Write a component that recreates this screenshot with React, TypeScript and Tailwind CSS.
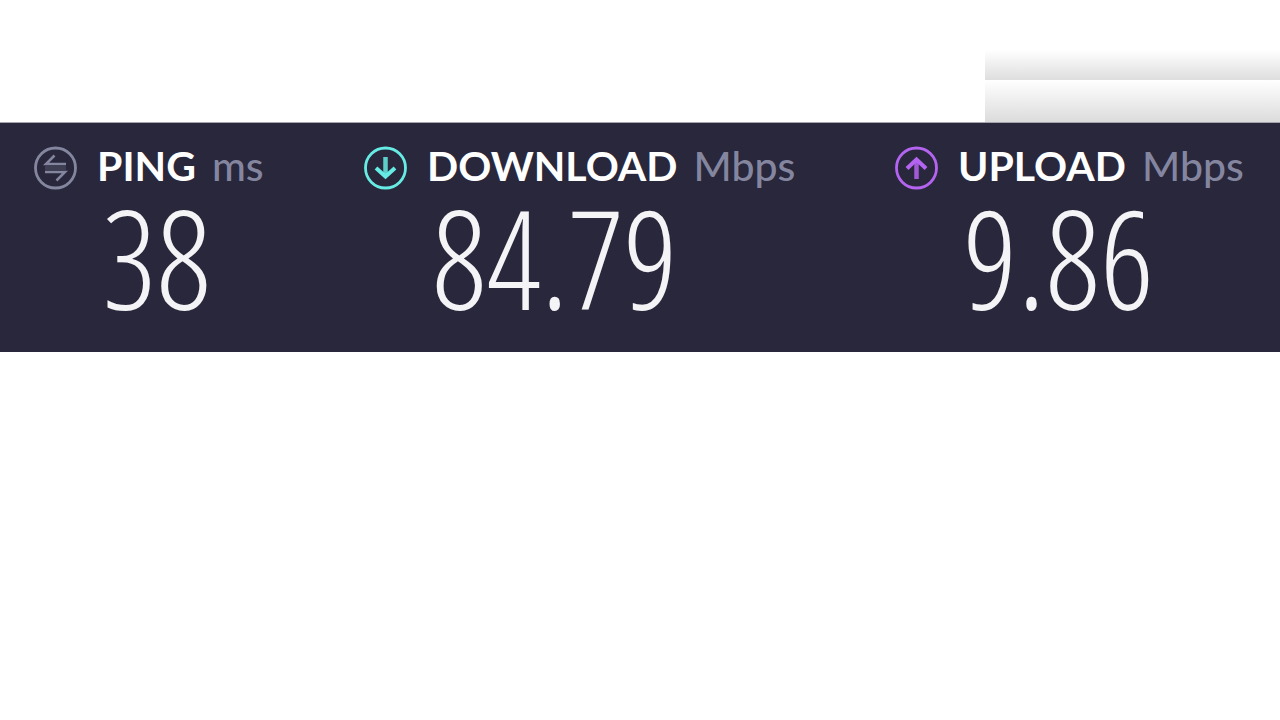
import React from 'react';

type IconKind = 'ping' | 'download' | 'upload';

interface Metric {
  kind: IconKind;
  label: string;
  unit: string;
  value: string;
}

const metrics: Metric[] = [
  { kind: 'ping', label: 'PING', unit: 'ms', value: '38' },
  { kind: 'download', label: 'DOWNLOAD', unit: 'Mbps', value: '84.79' },
  { kind: 'upload', label: 'UPLOAD', unit: 'Mbps', value: '9.86' },
];

const iconColors: Record<IconKind, string> = {
  ping: 'text-[#8486a0]',
  download: 'text-[#66ece4]',
  upload: 'text-[#b564f2]',
};

const MetricIcon: React.FC<{ kind: IconKind }> = ({ kind }) => (
  <svg
    viewBox="0 0 44 44"
    fill="none"
    stroke="currentColor"
    className={`w-11 h-11 shrink-0 ${iconColors[kind]}`}
    aria-hidden="true"
  >
    <circle cx="22.5" cy="22" r="20" strokeWidth="2.8" />
    {kind === 'ping' && (
      <>
        <path d="M33 18H13L21.5 9.5" strokeWidth="2.5" />
        <path d="M12 26H32L23.5 34.5" strokeWidth="2.5" />
        <path d="M12 22H33" strokeWidth="4" opacity="0.25" />
      </>
    )}
    {kind === 'download' && (
      <>
        <path d="M22.5 11V31" strokeWidth="4.5" opacity="0.85" />
        <path d="M13 22L22.5 30.5L32 22" strokeWidth="4" />
      </>
    )}
    {kind === 'upload' && (
      <>
        <path d="M22.5 33V13" strokeWidth="4.5" opacity="0.85" />
        <path d="M13 22.5L22.5 13.5L32 22.5" strokeWidth="4" />
      </>
    )}
  </svg>
);

const App: React.FC = () => {
  return (
    <div className="min-h-screen bg-white font-['Lato',sans-serif]">
      {/* Page header with the shaded strips on the right */}
      <header className="flex justify-end border-b border-[#a5a5ad] pt-[50px]">
        <div className="w-[23.05%]">
          <div className="h-[30px] bg-linear-to-b from-white to-[#dedede]" />
          <div className="h-[42px] bg-linear-to-b from-white to-[#dcdcdc]" />
        </div>
      </header>

      {/* Results */}
      <main className="grid grid-cols-[330fr_531fr_386fr] bg-[#29273b] pt-[23px] pb-[26px] pl-[33px]">
        {metrics.map(m => (
          <section key={m.kind} className="whitespace-nowrap">
            <div className="flex items-start gap-5">
              <MetricIcon kind={m.kind} />
              <h2 className="flex gap-4 text-[41px] leading-[40px] font-bold text-white">
                {m.label}
                <span className="font-medium text-[#8486a0]">{m.unit}</span>
              </h2>
            </div>
            <p className="pl-[69px] text-[136px] leading-[136px] font-light text-[#f4f4f6] font-['Open_Sans_Condensed_Light','Open_Sans_Condensed',sans-serif]">
              {m.value}
            </p>
          </section>
        ))}
      </main>
    </div>
  );
};

export default App;
